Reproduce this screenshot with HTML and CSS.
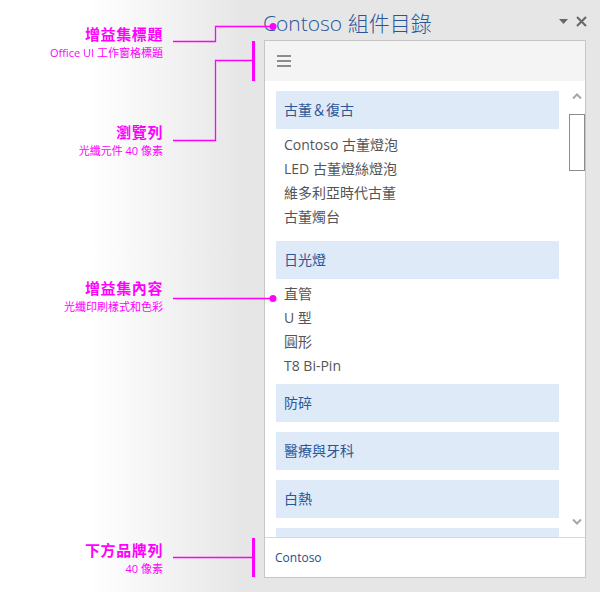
FILE: index.html
```html
<!DOCTYPE html>
<html lang="zh-Hant">
<head>
<meta charset="utf-8">
<title>Contoso 組件目錄</title>
<link rel="stylesheet" href="styles.css">
</head>
<body>
<div class="page">
  <aside class="notes">
    <div class="note note--title">
      <div class="note-name">增益集標題</div>
      <div class="note-desc">Office UI 工作窗格標題</div>
    </div>
    <div class="note note--nav">
      <div class="note-name">瀏覽列</div>
      <div class="note-desc">光纖元件 40 像素</div>
    </div>
    <div class="note note--content">
      <div class="note-name">增益集內容</div>
      <div class="note-desc">光纖印刷樣式和色彩</div>
    </div>
    <div class="note note--footer">
      <div class="note-name">下方品牌列</div>
      <div class="note-desc">40 像素</div>
    </div>
  </aside>

  <section class="taskpane">
    <header class="pane-titlebar">
      <h1 class="pane-title">Contoso 組件目錄</h1>
      <div class="pane-actions">
        <svg class="icon-drop" width="9" height="5" viewBox="0 0 9 5"><path d="M0 0H9L4.5 5Z"/></svg>
        <svg class="icon-close" width="11" height="11" viewBox="0 0 11 11"><path d="M1 1L10 10M10 1L1 10"/></svg>
      </div>
    </header>

    <div class="pane-box">
      <nav class="navbar">
        <svg class="icon-menu" width="14" height="12" viewBox="0 0 14 12"><path d="M0 1H14M0 6H14M0 11H14"/></svg>
      </nav>

      <div class="content">
        <div class="catalog">
          <div class="group">
            <div class="group-head">古董＆復古</div>
            <ul class="group-items">
              <li>Contoso 古董燈泡</li>
              <li>LED 古董燈絲燈泡</li>
              <li>維多利亞時代古董</li>
              <li>古董燭台</li>
            </ul>
          </div>
          <div class="group">
            <div class="group-head">日光燈</div>
            <ul class="group-items group-items--tight">
              <li>直管</li>
              <li>U 型</li>
              <li>圓形</li>
              <li>T8 Bi-Pin</li>
            </ul>
          </div>
          <div class="group"><div class="group-head">防碎</div></div>
          <div class="group"><div class="group-head">醫療與牙科</div></div>
          <div class="group"><div class="group-head">白熱</div></div>
          <div class="group"><div class="group-head"></div></div>
        </div>
        <div class="scrollbar">
          <svg class="scroll-arrow" width="10" height="6" viewBox="0 0 10 6"><path d="M1 5.5L5 1.5L9 5.5"/></svg>
          <div class="scroll-thumb"></div>
          <svg class="scroll-arrow scroll-arrow--down" width="10" height="6" viewBox="0 0 10 6"><path d="M1 0.5L5 4.5L9 0.5"/></svg>
        </div>
      </div>

      <footer class="brandbar">Contoso</footer>
    </div>
  </section>

  <svg class="leaders" width="600" height="592" viewBox="0 0 600 592">
    <polyline points="173,41.5 215.5,41.5 215.5,26.5 273,26.5"/>
    <circle cx="273" cy="26.5" r="3.5"/>
    <polyline points="173,140.5 215.5,140.5 215.5,60.5 253,60.5"/>
    <rect x="252" y="41" width="3" height="40"/>
    <line x1="173" y1="298.5" x2="273" y2="298.5"/>
    <circle cx="273" cy="298.5" r="3.5"/>
    <line x1="173" y1="557.5" x2="253" y2="557.5"/>
    <rect x="252" y="538" width="3" height="39"/>
  </svg>
</div>
</body>
</html>
```

FILE: styles.css
```css
* {
  box-sizing: border-box;
}

html, body {
  margin: 0;
  padding: 0;
}

body {
  width: 600px;
  height: 592px;
  overflow: hidden;
  background: linear-gradient(90deg, #ffffff 90px, #e6e6e6 245px);
  font-family: "Open Sans", "Noto Sans CJK TC", sans-serif;
}

.page {
  position: relative;
  display: flex;
  height: 592px;
}

/* ---------- annotations ---------- */
.notes {
  position: relative;
  width: 263px;
  flex: none;
}

.note {
  position: absolute;
  right: 100px;
  text-align: right;
  color: #ff00ff;
  white-space: nowrap;
}

.note--title { top: 23px; }
.note--nav { top: 121px; }
.note--content { top: 277px; }
.note--footer { top: 539px; }

.note-name {
  font-family: "Noto Sans CJK TC", sans-serif;
  font-weight: 700;
  font-size: 15px;
  line-height: 22px;
  letter-spacing: 0.6px;
}

.note-desc {
  font-family: "Open Sans", "Noto Sans CJK TC", sans-serif;
  font-size: 11px;
  line-height: 15px;
}

.leaders {
  position: absolute;
  left: 0;
  top: 0;
  pointer-events: none;
}

.leaders polyline,
.leaders line {
  fill: none;
  stroke: #ff00ff;
  stroke-width: 1.3;
}

.leaders circle,
.leaders rect {
  fill: #ff00ff;
}

/* ---------- task pane ---------- */
.taskpane {
  width: 337px;
  flex: none;
  display: flex;
  flex-direction: column;
}

.pane-titlebar {
  height: 40px;
  display: flex;
  align-items: center;
  padding: 6px 13px 0 0;
}

.pane-title {
  margin: 0;
  flex: 1;
  font-family: "Open Sans", "Noto Sans CJK TC", sans-serif;
  font-weight: 300;
  font-size: 21px;
  line-height: 26px;
  color: #2a5699;
}

.pane-actions {
  display: flex;
  align-items: center;
  gap: 8px;
  margin-top: -4px;
}

.icon-drop path {
  fill: #666666;
}

.icon-close path {
  stroke: #666666;
  stroke-width: 2;
  fill: none;
}

.pane-box {
  margin-left: 1px;
  width: 322px;
  height: 538px;
  border: 1px solid #c6c6c6;
  background: #ffffff;
  display: flex;
  flex-direction: column;
}

.navbar {
  height: 40px;
  flex: none;
  background: #f4f4f4;
  display: flex;
  align-items: center;
  padding-left: 12px;
}

.icon-menu path {
  stroke: #6a6a6a;
  stroke-width: 1.6;
  fill: none;
}

.content {
  flex: 1;
  display: flex;
  overflow: hidden;
}

.catalog {
  flex: 1;
  padding: 0 0 0 11px;
  overflow: hidden;
}

.group {
  margin-top: 10px;
}

.group-head {
  height: 38px;
  line-height: 38px;
  padding-left: 8px;
  background: #deeaf7;
  color: #2b5797;
  font-size: 14px;
}

.group-items {
  list-style: none;
  margin: 0;
  padding: 4px 0 2px 8px;
}

.group-items--tight {
  padding-top: 3px;
  padding-bottom: 0;
  margin-bottom: -4px;
}

.group-items li {
  font-size: 14px;
  line-height: 24px;
  color: #555555;
}

.scrollbar {
  width: 16px;
  margin-left: 10px;
  flex: none;
  display: flex;
  flex-direction: column;
  align-items: center;
  padding: 12px 0 12px;
}

.scroll-arrow path {
  fill: none;
  stroke: #a6a6a6;
  stroke-width: 2;
}

.scroll-thumb {
  margin-top: 15px;
  width: 16px;
  height: 57px;
  border: 1px solid #8c8c8c;
  background: #ffffff;
}

.scroll-arrow--down {
  margin-top: auto;
}

.brandbar {
  height: 40px;
  flex: none;
  border-top: 1px solid #c7dcf0;
  display: flex;
  align-items: center;
  padding-left: 10px;
  font-size: 12px;
  color: #1e4e8c;
}
```
